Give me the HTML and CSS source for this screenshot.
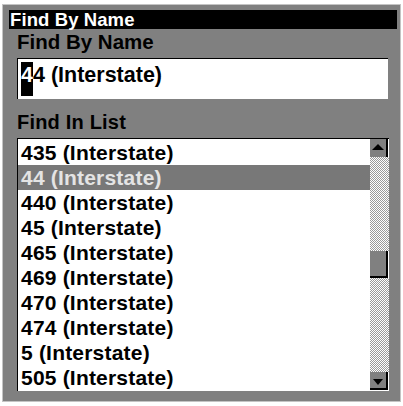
FILE: index.html
```html
<!DOCTYPE html>
<html lang="en">
<head>
    <meta charset="UTF-8">
    <meta name="viewport" content="width=device-width, initial-scale=1.0">
    <title>Find By Name</title>
    <link rel="stylesheet" href="styles.css">
</head>
<body>
    <div class="window">
        <div class="titlebar">Find By Name</div>

        <div class="label label-first">Find By Name</div>
        <div class="input"><span class="cursor">4</span>4 (Interstate)</div>

        <div class="label label-list">Find In List</div>
        <div class="list">
            <div class="rows">
                <div class="row">435 (Interstate)</div>
                <div class="row selected">44 (Interstate)</div>
                <div class="row">440 (Interstate)</div>
                <div class="row">45 (Interstate)</div>
                <div class="row">465 (Interstate)</div>
                <div class="row">469 (Interstate)</div>
                <div class="row">470 (Interstate)</div>
                <div class="row">474 (Interstate)</div>
                <div class="row">5 (Interstate)</div>
                <div class="row">505 (Interstate)</div>
            </div>
            <div class="scrollbar">
                <div class="btn btn-up"><span class="arrow-up"></span></div>
                <div class="track track-top"></div>
                <div class="thumb"></div>
                <div class="track track-bottom"></div>
                <div class="btn btn-down"><span class="arrow-down"></span></div>
            </div>
        </div>
    </div>
</body>
</html>
```

FILE: styles.css
```css
body {
    margin: 0;
    background-color: #ffffff;
    font-family: "Liberation Sans", Arial, sans-serif;
    font-weight: bold;
}
.window {
    box-sizing: border-box;
    width: 399px;
    height: 398px;
    margin: 4px 0 0 2px;
    padding: 5px 3px 0 6px;
    background-color: #808080;
    border: 1px solid #c4c4c4;
}
.titlebar {
    height: 19px;
    line-height: 19px;
    padding-left: 1px;
    background-color: #000000;
    color: #ffffff;
    font-size: 18.5px;
    letter-spacing: 0.1px;
    white-space: nowrap;
}
.label {
    margin-left: 8px;
    height: 22px;
    line-height: 22px;
    color: #000000;
    white-space: nowrap;
}
.label-first {
    margin-top: 2px;
    font-size: 20.5px;
}
.label-list {
    margin-top: 12px;
    font-size: 20px;
    letter-spacing: 0.2px;
}
.input {
    box-sizing: border-box;
    width: 371px;
    height: 41px;
    margin: 5px 0 0 8px;
    padding: 4px 0 0 3px;
    background-color: #ffffff;
    border-top: 1px solid #000000;
    border-left: 1px solid #000000;
    font-size: 21.5px;
    line-height: 25px;
    color: #000000;
    white-space: nowrap;
}
.cursor {
    display: inline-block;
    height: 34px;
    margin-top: -1px;
    vertical-align: top;
    line-height: 26px;
    background-color: #000000;
    color: #ffffff;
}
.list {
    display: flex;
    box-sizing: border-box;
    width: 372px;
    height: 253px;
    margin: 5px 0 0 8px;
    background-color: #ffffff;
    border-top: 1px solid #000000;
    border-left: 1px solid #000000;
}
.rows {
    flex: 1;
    padding-top: 1px;
}
.row {
    height: 25px;
    line-height: 25px;
    padding-left: 3px;
    font-size: 21px;
    letter-spacing: 0.2px;
    color: #000000;
    white-space: nowrap;
}
.row.selected {
    background-color: #787878;
    color: #e4e4e4;
}
.scrollbar {
    display: flex;
    flex-direction: column;
    width: 19px;
}
.btn {
    box-sizing: border-box;
    width: 18px;
    display: flex;
    align-items: center;
    justify-content: center;
    background-color: #808080;
    border-right: 2px solid #000000;
}
.btn-up {
    height: 18px;
}
.btn-down {
    height: 18px;
    border-bottom: 2px solid #000000;
}
.arrow-up {
    width: 0;
    height: 0;
    border-left: 6px solid transparent;
    border-right: 6px solid transparent;
    border-bottom: 6px solid #000000;
    margin-top: -2px;
}
.arrow-down {
    width: 0;
    height: 0;
    border-left: 5px solid transparent;
    border-right: 5px solid transparent;
    border-top: 6px solid #000000;
    margin-top: 4px;
}
.track {
    background-image: repeating-conic-gradient(#9a9a9a 0 25%, #ffffff 0 50%);
    background-size: 2px 2px;
}
.track-top {
    height: 94px;
}
.track-bottom {
    height: 94px;
}
.thumb {
    box-sizing: border-box;
    width: 18px;
    height: 27px;
    background-color: #808080;
    border-right: 2px solid #000000;
    border-bottom: 2px solid #000000;
}
```
